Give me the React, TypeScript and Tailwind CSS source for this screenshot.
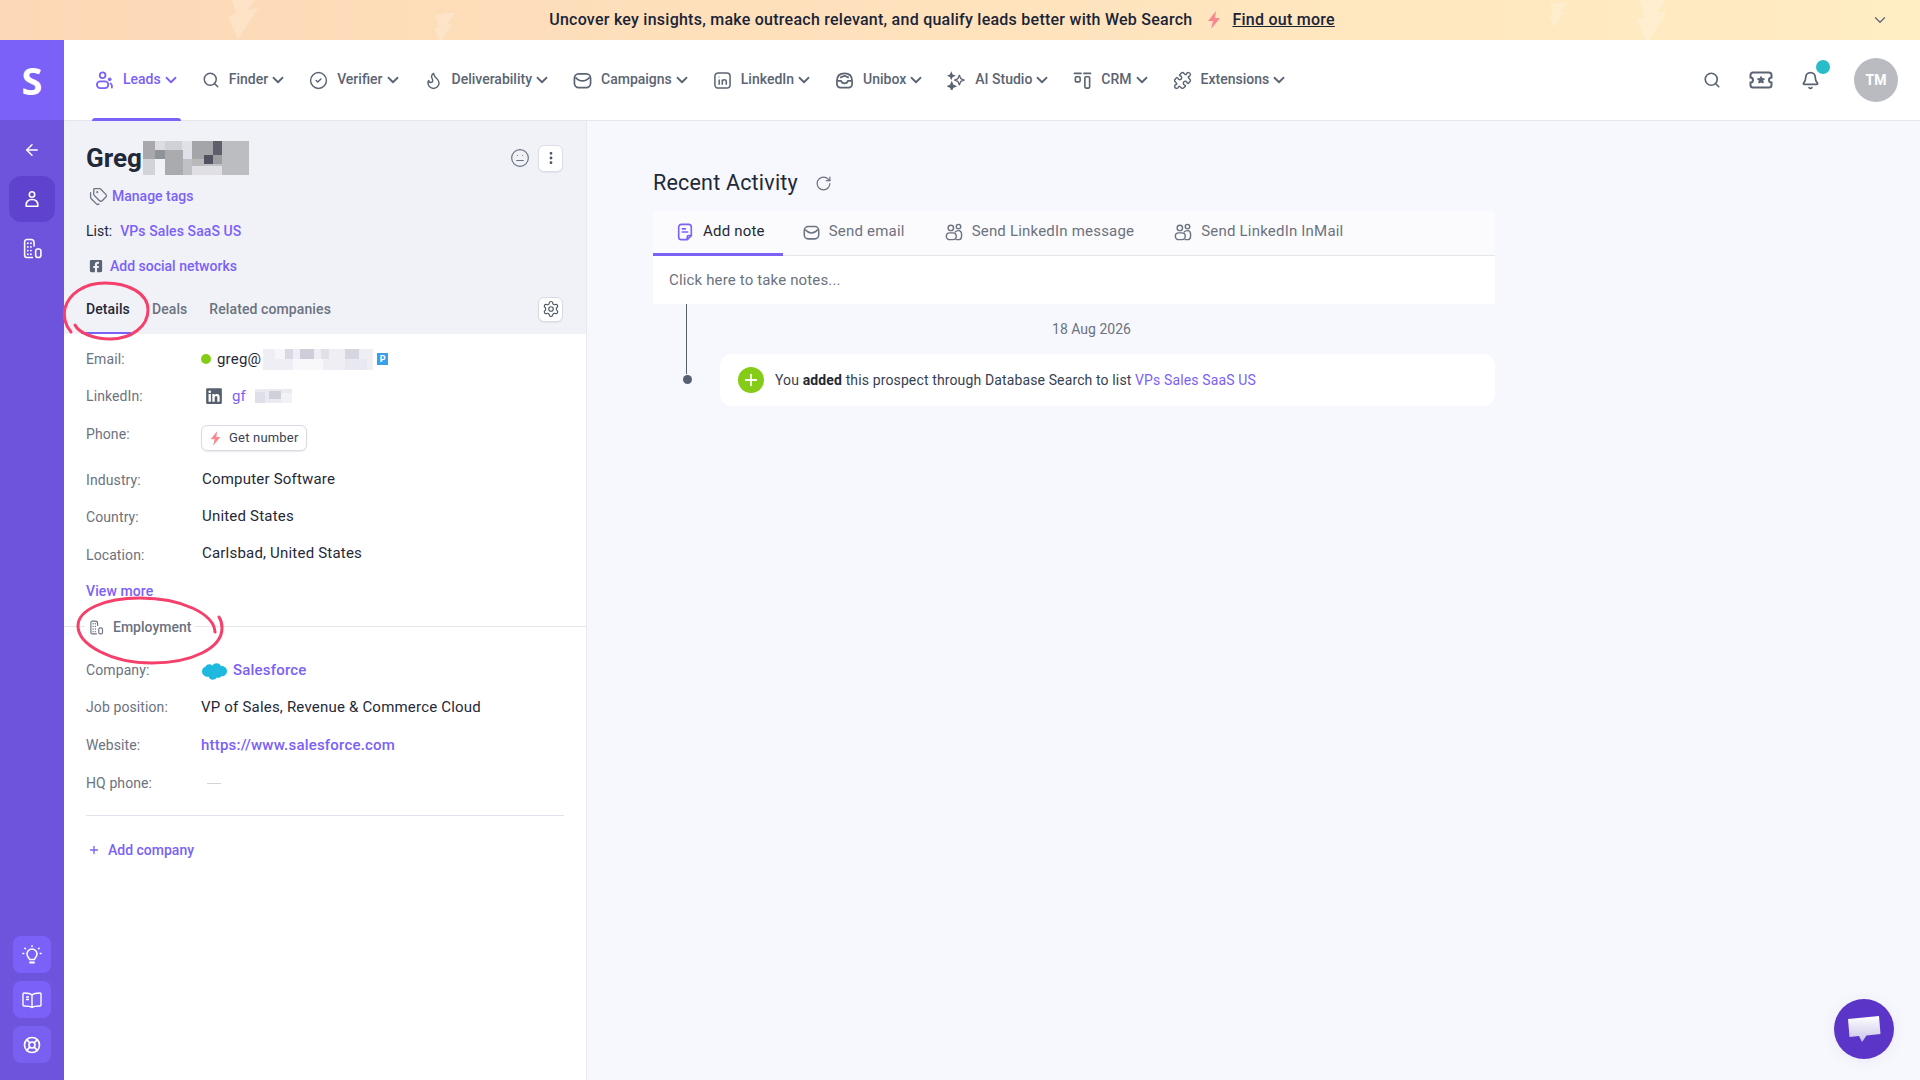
import { ReactNode } from "react";
import {
  ArrowLeft,
  Bell,
  ChevronDown,
  CircleCheck,
  EllipsisVertical,
  Flame,
  LifeBuoy,
  Meh,
  Plus,
  Puzzle,
  RotateCw,
  Search,
  Settings,
  Tags,
} from "lucide-react";
import { FaLinkedin, FaFacebookSquare } from "react-icons/fa";

type IconProps = { className?: string };

function People({ className }: IconProps) {
  return (
    <svg viewBox="0 0 20 20" fill="none" stroke="currentColor" strokeWidth="1.900" className={className}>
      <circle cx="8" cy="4.500" r="3" />
      <rect x="2" y="11" width="12" height="7" rx="3.500" />
      <circle cx="15.500" cy="8.800" r="1.700" fill="currentColor" strokeWidth="0.500" />
      <path d="M16.500 13c1 .8 1.500 2.500 1.300 4.500" strokeLinecap="round" />
    </svg>
  );
}

function TwoPeople({ className }: IconProps) {
  return (
    <svg viewBox="0 0 20 20" fill="none" stroke="currentColor" strokeWidth="1.600" className={className}>
      <circle cx="6.500" cy="5.500" r="3" />
      <circle cx="15" cy="4" r="2.500" />
      <rect x="1.500" y="11" width="11" height="7.500" rx="3.700" />
      <path d="M11 10.500c1-1.500 2.500-2 4-2 2.500 0 3.500 2 3.500 5 0 3-1 5-3.500 5h-3" />
    </svg>
  );
}

function Envelope({ className }: IconProps) {
  return (
    <svg viewBox="0 0 20 20" fill="none" stroke="currentColor" strokeWidth="1.800" className={className}>
      <rect x="1.500" y="3" width="17" height="14.500" rx="4.500" />
      <path d="M2.500 6.500c2 2.500 4.500 4 7.500 4s5.500-1.500 7.500-4" strokeLinejoin="round" />
    </svg>
  );
}

function LinkedinSquare({ className }: IconProps) {
  return (
    <svg viewBox="0 0 20 20" fill="none" stroke="currentColor" strokeWidth="1.600" className={className}>
      <rect x="2" y="2" width="16" height="16" rx="3.500" />
      <path d="M6.500 9v5.500M6.500 6v.5M9.800 14.500V9M9.800 11.500c0-3 4.200-3 4.200 0v3" />
    </svg>
  );
}

function Inbox({ className }: IconProps) {
  return (
    <svg viewBox="0 0 20 20" fill="none" stroke="currentColor" strokeWidth="1.800" className={className}>
      <path d="M2 10.500c0-5 3-8 8-8s8 3 8 8v3.500a3.500 3.500 0 0 1-3.500 3.500h-9A3.500 3.500 0 0 1 2 14z" />
      <path d="M2.500 10.500h4c.5 2 1.500 2.500 3.500 2.500s3-.5 3.500-2.500h4M5.500 7l4.500-2 4.500 2" strokeLinejoin="round" />
    </svg>
  );
}

function Stars({ className }: IconProps) {
  return (
    <svg viewBox="0 0 20 20" fill="none" stroke="currentColor" strokeWidth="1.400" className={className}>
      <path d="M13 4.500l1.500 3.500 3.500 1.500-3.500 1.500-1.500 3.500-1.500-3.500L8 9.500 11.500 8z" strokeLinejoin="round" />
      <path d="M5 12l1.200 2.800L9 16l-2.800 1.200L5 20l-1.200-2.800L1 16l2.800-1.200z" fill="currentColor" />
      <path d="M4.500 2l.9 2.100 2.100.9-2.100.9-.9 2.100-.9-2.100L1.500 5l2.100-.9z" fill="currentColor" />
    </svg>
  );
}

function Crm({ className }: IconProps) {
  return (
    <svg viewBox="0 0 20 20" fill="none" stroke="currentColor" strokeWidth="1.700" className={className}>
      <path d="M1.500 2.500h7M11.500 2.500h7" strokeLinecap="round" />
      <rect x="2.500" y="6" width="5" height="5.500" rx="1.300" />
      <rect x="12.500" y="6" width="5" height="12" rx="1.300" />
    </svg>
  );
}

function Ticket({ className }: IconProps) {
  return (
    <svg viewBox="0 0 24 20" fill="none" stroke="currentColor" strokeWidth="2" className={className}>
      <path d="M4 2.500h16a2.500 2.500 0 0 1 2.500 2.500v2.500a2.500 2.500 0 0 0 0 5V15a2.500 2.500 0 0 1-2.500 2.500H4A2.500 2.500 0 0 1 1.500 15v-2.500a2.500 2.500 0 0 0 0-5V5A2.500 2.500 0 0 1 4 2.500z" />
      <path d="M12 6.500l1.200 2 2.300.4-1.600 1.700.3 2.400-2.200-1-2.200 1 .3-2.400-1.600-1.700 2.300-.4z" fill="currentColor" strokeWidth="1" strokeLinejoin="round" />
    </svg>
  );
}

function Company({ className }: IconProps) {
  return (
    <svg viewBox="0 0 20 20" fill="none" stroke="currentColor" strokeWidth="1.500" className={className}>
      <path d="M10.500 18.500H4.500a2 2 0 0 1-2-2V3.500a2 2 0 0 1 2-2h4a3 3 0 0 1 3 3V8" />
      <rect x="13" y="10.500" width="5" height="8" rx="2" />
      <path d="M5.500 5h.01M8.500 5h.01M5.500 8.500h.01M8.500 8.500h.01M5.500 12h.01M8.500 12h.01M5.500 15.500h.01M8.500 15.500h.01" strokeLinecap="round" strokeWidth="1.800" />
    </svg>
  );
}

function Person({ className }: IconProps) {
  return (
    <svg viewBox="0 0 20 20" fill="none" stroke="currentColor" strokeWidth="1.800" className={className}>
      <circle cx="10" cy="5" r="3" />
      <path d="M3.500 18c-.6-5 2.500-7.500 6.500-7.500s7.100 2.500 6.500 7.500z" strokeLinejoin="round" />
    </svg>
  );
}

function Note({ className }: IconProps) {
  return (
    <svg viewBox="0 0 20 20" fill="none" stroke="#7b61f8" strokeWidth="1.800" className={className}>
      <path d="M6 1.500h8a3 3 0 0 1 3 3v9.500l-4.500 4.500H6a3 3 0 0 1-3-3V4.500a3 3 0 0 1 3-3z" />
      <path d="M7 6.500h3.500M7 10h6" strokeLinecap="round" />
      <path d="M17 14h-3a1.500 1.500 0 0 0-1.500 1.500v3" />
    </svg>
  );
}

function Bulb({ className }: IconProps) {
  return (
    <svg viewBox="0 0 20 20" fill="none" stroke="currentColor" strokeWidth="1.500" strokeLinecap="round" className={className}>
      <path d="M7.500 14.500c0-1.500-2.500-2.500-2.500-5.500a5 5 0 0 1 10 0c0 3-2.500 4-2.500 5.500z" strokeLinejoin="round" />
      <path d="M8 17.500h4" strokeWidth="2" />
      <path d="M10 .8v.8M2.800 3.200l.7.6M17.200 3.200l-.7.6M.8 8.500h1M18.200 8.500h1" />
    </svg>
  );
}

function Book({ className }: IconProps) {
  return (
    <svg viewBox="0 0 20 20" fill="none" stroke="currentColor" strokeWidth="1.400" strokeLinejoin="round" className={className}>
      <path d="M10 5c-1.500-1.500-3.500-2-8-2-.6 0-1 .4-1 1v11c0 .6.400 1 1 1 4 0 6.500.3 8 1.500 1.500-1.200 4-1.500 8-1.500.6 0 1-.4 1-1V4c0-.6-.4-1-1-1-4.500 0-6.500.5-8 2z" />
      <path d="M10 5v12M4 7h3M4 9.500h3" />
    </svg>
  );
}

function Bolt({ className }: IconProps) {
  return (
    <svg viewBox="0 0 16 18" className={className}>
      <path d="M10 0L2 10h5l-2 8 9-11H9z" fill="#f9878f" />
    </svg>
  );
}

function BannerBolt({ className }: IconProps) {
  return (
    <svg viewBox="0 0 40 50" className={className}>
      <path d="M24 0L4 4l6 20-8 2 10 24 20-32-10 2 14-20z" fill="#ffffff" fillOpacity="0.22" />
    </svg>
  );
}

function Mosaic({ w, h, cells }: { w: number; h: number; cells: [number, number, number, number, string][] }) {
  return (
    <svg width={w} height={h} viewBox={`0 0 ${w} ${h}`} className="shrink-0">
      {cells.map(([x, y, cw, ch, fill], i) => (
        <rect key={i} x={x} y={y} width={cw} height={ch} fill={fill} />
      ))}
    </svg>
  );
}

const nameCells: [number, number, number, number, string][] = [
  [0, 0, 106, 34, "#c0c1c6"],
  [0, 0, 12, 18, "#a9a9ad"],
  [12, 0, 10, 9, "#dcdde2"],
  [22, 0, 17, 9, "#cfd0d8"],
  [39, 0, 10, 18, "#dfe0e8"],
  [49, 0, 21, 18, "#a4a5a9"],
  [70, 0, 9, 14, "#5d606b"],
  [79, 0, 27, 34, "#bcbdc1"],
  [12, 9, 10, 9, "#8d9399"],
  [22, 9, 18, 25, "#a9abaf"],
  [0, 18, 12, 16, "#d2d3da"],
  [12, 18, 10, 16, "#f1f2f8"],
  [49, 18, 12, 16, "#b9b9bc"],
  [61, 14, 9, 9, "#50535f"],
  [70, 14, 9, 9, "#9c9da1"],
  [49, 25, 30, 9, "#e0e0e4"],
];

const emailCells: [number, number, number, number, string][] = [
  [0, 0, 110, 21, "#eeeef4"],
  [12, 0, 11, 10, "#f6f6fa"],
  [22, 0, 8, 10, "#d8d9e2"],
  [37, 0, 14, 10, "#cdced8"],
  [58, 0, 8, 10, "#dfe0e8"],
  [82, 0, 14, 10, "#d5d6e0"],
  [30, 10, 30, 11, "#f8f8fb"],
  [82, 10, 22, 11, "#e8e8f0"],
];

const linkedinCells: [number, number, number, number, string][] = [
  [0, 0, 37, 14, "#eaeaf1"],
  [0, 3, 10, 11, "#dedfe8"],
  [14, 2, 12, 8, "#cfd0da"],
  [26, 4, 11, 10, "#f1f1f6"],
];

const navItems: { label: string; icon: ReactNode; active?: boolean }[] = [
  { label: "Leads", icon: <People className="w-[19px] h-[19px]" />, active: true },
  { label: "Finder", icon: <Search className="w-[18px] h-[18px]" strokeWidth={2} /> },
  { label: "Verifier", icon: <CircleCheck className="w-[19px] h-[19px]" strokeWidth={1.8} /> },
  { label: "Deliverability", icon: <Flame className="w-[19px] h-[19px]" strokeWidth={1.8} /> },
  { label: "Campaigns", icon: <Envelope className="w-[19px] h-[19px]" /> },
  { label: "LinkedIn", icon: <LinkedinSquare className="w-[19px] h-[19px]" /> },
  { label: "Unibox", icon: <Inbox className="w-[19px] h-[19px]" /> },
  { label: "AI Studio", icon: <Stars className="w-[19px] h-[19px]" /> },
  { label: "CRM", icon: <Crm className="w-[19px] h-[19px]" /> },
  { label: "Extensions", icon: <Puzzle className="w-[19px] h-[19px]" strokeWidth={1.8} /> },
];

function Row({ label, height, children }: { label: string; height: string; children: ReactNode }) {
  return (
    <div className={`flex items-center ${height}`}>
      <span className="w-[115px] shrink-0 text-[14px] text-[#6b7280] tracking-[0.1px]">{label}</span>
      <div className="flex items-center text-[15px] text-[#1f2937] tracking-[0.2px]">{children}</div>
    </div>
  );
}

function ActivityTab({ icon, label, active }: { icon: ReactNode; label: string; active?: boolean }) {
  return (
    <div
      className={`h-[45px] flex items-center gap-[9px] border-b-[3px] ${
        active ? "border-[#7b61f8] text-[#1f2937] pl-[23px] pr-[18px]" : "border-transparent text-[#6b7280] px-[20px]"
      }`}
    >
      {icon}
      <span className="text-[15px] tracking-[0.2px] relative top-[-1px]">{label}</span>
    </div>
  );
}

export default function App() {
  return (
    <div className="w-[1920px] h-[1080px] overflow-hidden flex flex-col font-['Roboto',sans-serif] bg-[#f7f8fd] relative">
      {/* Banner */}
      <div className="relative h-[40px] shrink-0 overflow-hidden bg-gradient-to-r from-[#fdd8b6] to-[#ffedc4] flex items-center justify-center">
        <BannerBolt className="absolute left-[226px] top-[-10px] w-[40px] h-[50px]" />
        <BannerBolt className="absolute left-[433px] top-[12px] w-[24px] h-[32px]" />
        <BannerBolt className="absolute left-[1548px] top-[2px] w-[20px] h-[26px]" />
        <BannerBolt className="absolute left-[1625px] top-[-8px] w-[60px] h-[52px]" />
        <div className="flex items-center text-[16px] font-medium text-[#1b2436] tracking-[0.25px] pr-[36px]">
          <span>Uncover key insights, make outreach relevant, and qualify leads better with Web Search</span>
          <Bolt className="w-[16px] h-[18px] ml-[14px] mr-[10px]" />
          <span className="underline">Find out more</span>
        </div>
        <ChevronDown className="absolute right-[31px] top-[11px] w-[18px] h-[18px] text-[#5b6472]" strokeWidth={1.6} />
      </div>

      <div className="flex flex-1 min-h-0">
        {/* Sidebar */}
        <aside className="w-[64px] shrink-0 bg-[#6e54dd] flex flex-col items-center">
          <div className="w-full h-[80px] bg-[#7b61f8] flex items-center justify-center text-white text-[38px] font-bold font-['Open_Sans',sans-serif]">
            S
          </div>
          <ArrowLeft className="w-[18px] h-[18px] text-white mt-[21px]" strokeWidth={2} />
          <div className="w-[46px] h-[46px] mt-[17px] rounded-xl bg-[#5f43cf] flex items-center justify-center">
            <Person className="w-[18px] h-[18px] text-white" />
          </div>
          <Company className="w-[21px] h-[21px] text-white mt-[16px]" />
          <div className="mt-auto mb-[17px] flex flex-col gap-[8px]">
            <div className="w-[38px] h-[37px] rounded-lg bg-[#7b61f8] flex items-center justify-center">
              <Bulb className="w-[20px] h-[20px] text-white" />
            </div>
            <div className="w-[38px] h-[37px] rounded-lg bg-[#7b61f8] flex items-center justify-center">
              <Book className="w-[20px] h-[20px] text-white" />
            </div>
            <div className="w-[38px] h-[37px] rounded-lg bg-[#7a60f0] flex items-center justify-center">
              <LifeBuoy className="w-[18px] h-[18px] text-white" strokeWidth={2.2} />
            </div>
          </div>
        </aside>

        <div className="flex-1 min-w-0 flex flex-col">
          {/* Top nav */}
          <header className="h-[81px] shrink-0 bg-white border-b border-[#e5e6ec] flex items-center pl-[31px] pr-[22px]">
            <nav className="flex items-center gap-[24px] h-full">
              {navItems.map((item) => (
                <div
                  key={item.label}
                  className={`relative h-full flex items-center ${item.active ? "text-[#7b61f8]" : "text-[#5b6472]"}`}
                >
                  {item.icon}
                  <span className="ml-[9px] text-[14px] font-medium relative top-[-1px]">{item.label}</span>
                  <ChevronDown className="w-[18px] h-[18px] ml-[1px] mr-[-2px]" strokeWidth={2.4} />
                  {item.active && (
                    <span className="absolute left-[-3px] right-[-3px] bottom-[-1px] h-[3px] rounded-t bg-[#7b61f8]" />
                  )}
                </div>
              ))}
            </nav>
            <div className="ml-auto flex items-center text-[#5b6472]">
              <Search className="w-[18px] h-[18px]" strokeWidth={2.2} />
              <Ticket className="w-[24px] h-[20px] ml-[28px]" />
              <div className="relative ml-[28px]">
                <Bell className="w-[19px] h-[19px]" strokeWidth={2.2} />
                <span className="absolute left-[15px] top-[-11px] w-[14px] h-[14px] rounded-full bg-[#27bcc7]" />
              </div>
              <div className="ml-[34px] w-[44px] h-[44px] rounded-full bg-[#b9bbc1] flex items-center justify-center text-white text-[14px] font-bold">
                TM
              </div>
            </div>
          </header>

          <div className="flex flex-1 min-h-0">
            {/* Left panel */}
            <section className="w-[523px] shrink-0 bg-white border-r border-[#e8e9ef] relative">
              <div className="h-[213px] bg-[#f1f2f8] pl-[22px] pr-[23px] relative">
                <div className="flex items-center justify-between pt-[20px] h-[54px]">
                  <div className="flex items-center">
                    <h1 className="text-[26px] font-bold text-[#1f2937] leading-[34px]">Greg</h1>
                    <span className="ml-[1px]">
                      <Mosaic w={106} h={34} cells={nameCells} />
                    </span>
                  </div>
                  <div className="flex items-center gap-[8px]">
                    <Meh className="w-[20px] h-[20px] text-[#6b7280]" strokeWidth={1.4} />
                    <div className="w-[25px] h-[27px] rounded-md bg-white border border-[#dcdde6] shadow-[0_1px_1px_rgba(0,0,0,0.06)] flex items-center justify-center">
                      <EllipsisVertical className="w-[16px] h-[16px] text-[#4b5563]" strokeWidth={2.2} />
                    </div>
                  </div>
                </div>
                <div className="flex items-center h-[20px] mt-[11px] pl-[3px] gap-[4px] text-[14px] font-medium text-[#7b61f8]">
                  <Tags className="w-[19px] h-[19px] text-[#6b7280]" strokeWidth={1.6} />
                  Manage tags
                </div>
                <div className="flex items-center h-[20px] mt-[15px] text-[14px]">
                  <span className="text-[#1f2937]">List:</span>
                  <span className="ml-[8px] text-[#7b61f8] font-medium tracking-[0.1px]">VPs Sales SaaS US</span>
                </div>
                <div className="flex items-center h-[20px] mt-[15px] pl-[3px] gap-[7px] text-[14px] font-medium text-[#7b61f8]">
                  <FaFacebookSquare className="w-[14px] h-[14px] text-[#5b6472]" />
                  Add social networks
                </div>
                <div className="flex items-center justify-between absolute left-[22px] right-[23px] top-[164px] h-[49px]">
                  <div className="flex items-center gap-[22px] text-[14px] font-medium text-[#6b7280] tracking-[0.1px]">
                    <span className="text-[#1f2937]">Details</span>
                    <span>Deals</span>
                    <span>Related companies</span>
                  </div>
                  <div className="w-[25px] h-[25px] mb-[1px] rounded-md bg-white border border-[#d9dae4] shadow-[0_1px_1px_rgba(0,0,0,0.06)] flex items-center justify-center">
                    <Settings className="w-[18px] h-[18px] text-[#4b5563]" strokeWidth={1.5} />
                  </div>
                </div>
                <span className="absolute left-[17px] top-[211px] w-[50px] h-[2px] bg-[#7b61f8]" />
              </div>

              <div className="pl-[22px] pr-[22px] pt-[6px]">
                <Row label="Email:" height="h-[38px]">
                  <span className="w-[10px] h-[10px] rounded-full bg-[#84cc16]" />
                  <span className="ml-[6px]">greg@</span>
                  <span className="ml-[2px]">
                    <Mosaic w={110} h={21} cells={emailCells} />
                  </span>
                  <span className="ml-[4px] w-[11px] h-[12px] bg-[#3b9eea] text-white text-[9px] font-bold leading-[12px] text-center">
                    P
                  </span>
                </Row>
                <Row label="LinkedIn:" height="h-[36px]">
                  <FaLinkedin className="ml-[4px] w-[18px] h-[18px] text-[#56606f]" />
                  <span className="ml-[9px] text-[#7b61f8]">gf</span>
                  <span className="ml-[9px]">
                    <Mosaic w={37} h={14} cells={linkedinCells} />
                  </span>
                </Row>
                <div className="flex items-start h-[48px] pt-[8px]">
                  <span className="w-[115px] shrink-0 text-[14px] text-[#6b7280] tracking-[0.1px] pt-[2px]">Phone:</span>
                  <div className="h-[26px] w-[106px] mt-[3px] rounded-md border border-[#d9dae4] shadow-[0_1px_1px_rgba(0,0,0,0.08)] flex items-center pl-[7px] gap-[7px] text-[13px] tracking-[0.2px] text-[#374151]">
                    <Bolt className="w-[13px] h-[15px]" />
                    Get number
                  </div>
                </div>
                <Row label="Industry:" height="h-[37px]">
                  <span className="relative top-[-1px] ml-[1px]">Computer Software</span>
                </Row>
                <Row label="Country:" height="h-[37px]">
                  <span className="relative top-[-1px] ml-[1px]">United States</span>
                </Row>
                <Row label="Location:" height="h-[38px]">
                  <span className="relative top-[-2px] ml-[1px]">Carlsbad, United States</span>
                </Row>
                <div className="h-[34px] flex items-center text-[14px] font-medium text-[#7b61f8] tracking-[0.1px]">View more</div>
              </div>

              <div className="relative h-[1px] bg-[#e5e6ec] mt-[18px]">
                <div className="absolute left-[21px] top-[-11px] h-[24px] bg-white px-[4px] flex items-center gap-[9px] text-[14px] font-medium text-[#6b7280]">
                  <Company className="w-[15px] h-[15px]" />
                  Employment
                </div>
              </div>

              <div className="pl-[22px] pr-[22px] pt-[25px]">
                <Row label="Company:" height="h-[37px]">
                  <svg viewBox="0 0 26 18" className="w-[25px] h-[18px] ml-[1px]">
                    <path
                      d="M10.500 3.500C11.500 2 13 1 15 1c2.500 0 4 1.300 4.700 2.800C23 3.300 26 6 26 9c0 3.500-3 6-6 5.500-1 1.500-3 2-4.500 1.200C14.500 17.500 12.500 18 11 18c-2 0-3.500-1-4-3C3.500 15.500 0 13 0 9.500 0 7 1.500 5 3.500 4.500 5.500 1.500 9 1.500 10.500 3.500z"
                      fill="#1fb9e0"
                    />
                  </svg>
                  <span className="ml-[6px] text-[#7b61f8] font-medium">Salesforce</span>
                </Row>
                <Row label="Job position:" height="h-[37px]">
                  <span>VP of Sales, Revenue &amp; Commerce Cloud</span>
                </Row>
                <Row label="Website:" height="h-[38px]">
                  <span className="text-[#7b61f8] font-medium">https://www.salesforce.com</span>
                </Row>
                <Row label="HQ phone:" height="h-[38px]">
                  <span className="ml-[6px] w-[14px] h-[1px] bg-[#d1d5db]" />
                </Row>
                <div className="h-[1px] bg-[#e3e3ee] mt-[13px]" />
                <div className="flex items-center h-[20px] mt-[24px] pl-[2px] gap-[8px] text-[14px] font-medium text-[#7b61f8]">
                  <Plus className="w-[12px] h-[12px]" strokeWidth={2.6} />
                  Add company
                </div>
              </div>
            </section>

            {/* Recent activity */}
            <main className="flex-1 min-w-0 pl-[66px] pt-[47px]">
              <div className="w-[842px]">
                <div className="flex items-center h-[30px]">
                  <h2 className="text-[21.5px] text-[#1f2937] font-normal tracking-[0.2px]">Recent Activity</h2>
                  <RotateCw className="w-[17px] h-[17px] ml-[17px] text-[#6b7280]" strokeWidth={1.7} />
                </div>
                <div className="mt-[13px] bg-[#fbfbfd] border-b border-[#e5e6ec] flex h-[45px]">
                  <ActivityTab active icon={<Note className="w-[18px] h-[18px]" />} label="Add note" />
                  <ActivityTab icon={<Envelope className="w-[17px] h-[17px]" />} label="Send email" />
                  <ActivityTab icon={<TwoPeople className="w-[18px] h-[18px]" />} label="Send LinkedIn message" />
                  <ActivityTab icon={<TwoPeople className="w-[18px] h-[18px]" />} label="Send LinkedIn InMail" />
                </div>
                <div className="bg-white h-[48px] pl-[16px] flex items-center text-[15px] tracking-[0.15px] text-[#6b7280]">
                  Click here to take notes...
                </div>
                <div className="relative pl-[67px]">
                  {/* timeline */}
                  <span className="absolute left-[33px] top-0 h-[70px] w-[1px] bg-[#56606f]" />
                  <span className="absolute left-[30px] top-[71px] w-[9px] h-[9px] rounded-full bg-[#56606f]" />
                  <div className="h-[50px] flex items-center justify-center text-[14px] text-[#6b7280] pr-[32px]">
                    18 Aug 2026
                  </div>
                  <div className="h-[52px] bg-white rounded-xl flex items-center pl-[18px] text-[14px] text-[#374151] tracking-[0.13px]">
                    <span className="w-[26px] h-[26px] rounded-full bg-[#84cc16] flex items-center justify-center">
                      <Plus className="w-[18px] h-[18px] text-white" strokeWidth={2.4} />
                    </span>
                    <span className="ml-[11px]">
                      You <b className="font-bold text-[#1f2937]">added</b> this prospect through Database Search to list{" "}
                      <span className="text-[#7b61f8]">VPs Sales SaaS US</span>
                    </span>
                  </div>
                </div>
              </div>
            </main>
          </div>
        </div>
      </div>

      {/* Hand-drawn marks over the page */}
      <svg className="absolute left-[60px] top-[280px] w-[100px] h-[64px] pointer-events-none" viewBox="0 0 100 64" fill="none">
        <path
          d="M15 45C19 53 34 59 50 59 72 59 88 46 88 30 88 13 68 3 45 3 24 3 9 14 5 28 3 37 6 46 11 52"
          stroke="#f5406c"
          strokeWidth="3"
          strokeLinecap="round"
        />
      </svg>
      <svg className="absolute left-[70px] top-[590px] w-[160px] h-[80px] pointer-events-none" viewBox="0 0 160 80" fill="none">
        <path
          d="M145 42C144 24 112 8 70 8 34 8 8 20 8 36 8 54 40 73 82 73 122 73 152 58 152 38 152 34 151 30 149 27"
          stroke="#f5406c"
          strokeWidth="3"
          strokeLinecap="round"
        />
      </svg>

      {/* Chat button */}
      <div className="absolute left-[1834px] top-[999px] w-[60px] h-[60px] rounded-full bg-[#5a35c8] shadow-[0_2px_14px_rgba(90,53,200,0.08)] flex items-center justify-center">
        <svg viewBox="0 0 34 30" className="w-[34px] h-[30px]">
          <defs>
            <linearGradient id="chatFill" x1="0" y1="0" x2="0" y2="1">
              <stop offset="0" stopColor="#ffffff" />
              <stop offset="1" stopColor="#c8c2e8" />
            </linearGradient>
          </defs>
          <path d="M1 5l31-3 1.500 18-14 1.500L15 28l-3-6L2.500 23z" fill="url(#chatFill)" />
        </svg>
      </div>
    </div>
  );
}
